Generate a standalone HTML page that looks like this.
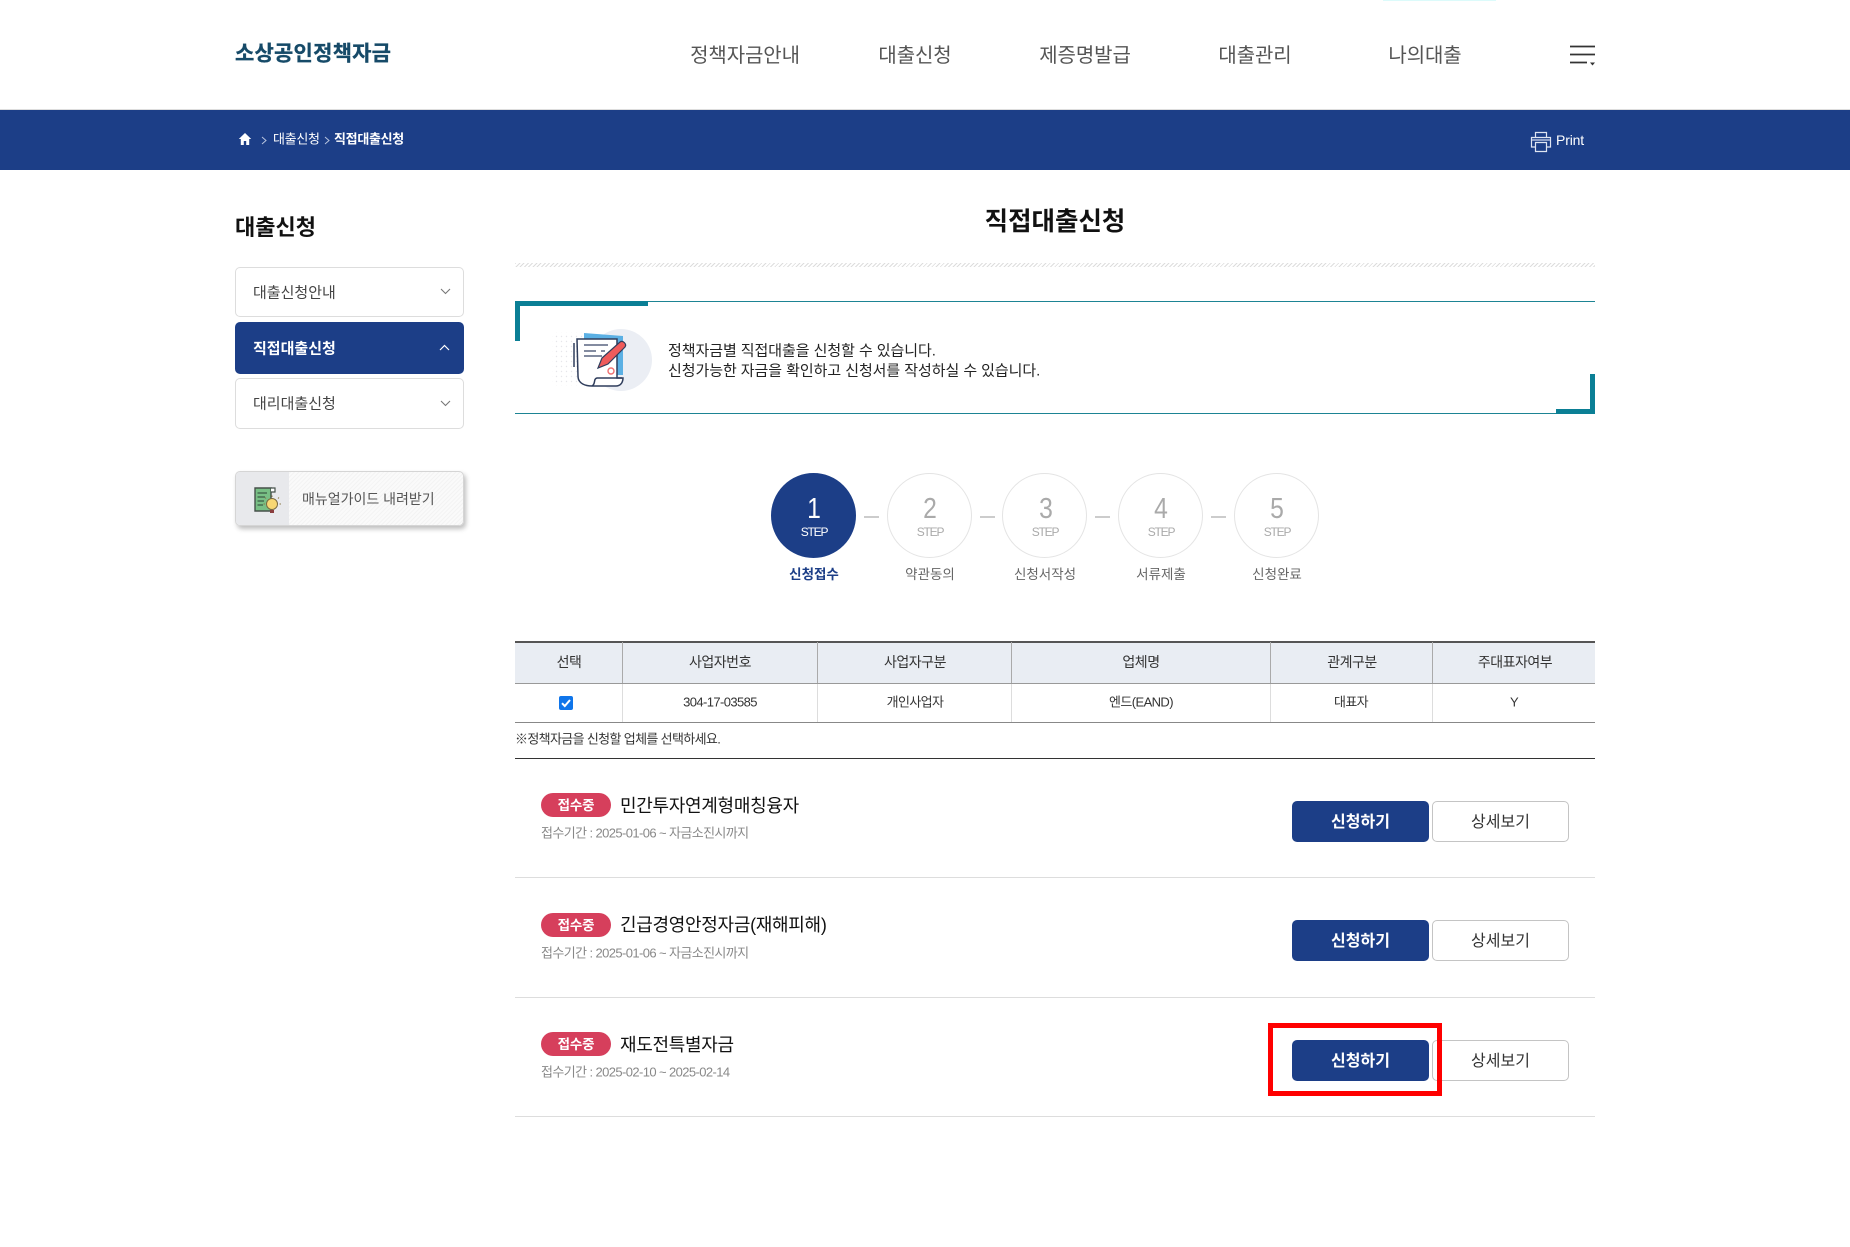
<!DOCTYPE html>
<html lang="ko"><head><meta charset="utf-8"><title>직접대출신청</title>
<style>
html,body{margin:0;padding:0;background:#fff}
#p{position:relative;width:1850px;height:1247px;overflow:hidden;background:#fff;font-family:"Liberation Sans","Noto Sans CJK KR",sans-serif;color:#333}
#p div,#p svg{position:absolute;box-sizing:border-box}
.t{white-space:nowrap;line-height:1}
.c{transform:translateX(-50%)}
.m{transform:translateY(-50%)}
.cm{transform:translate(-50%,-50%)}
.nav{font-size:20px;color:#555;top:46px;letter-spacing:-.1px}
.box{left:235px;width:229px;border:1px solid #ddd;border-radius:5px;background:#fff}
.lab{left:253px;font-size:15px;color:#444}
.line{left:515px;width:1080px;height:1px;background:#ddd}
.sc{width:85px;height:85px;top:473px;border-radius:50%;border:1px solid #e4e4e4;background:#fff}
.sn{font-size:29px;top:495px;color:#aaa;font-weight:400;transform:translateX(-50%) scaleX(.85)}
.ss{font-size:12px;top:526px;color:#aaa;letter-spacing:-1.2px}
.sl{font-size:13.5px;top:568px;color:#666}
.dash{width:15px;height:2px;top:516px;background:#ccc}
.th{font-size:14px;top:662px;color:#333;letter-spacing:-.5px}
.td{font-size:13px;top:702px;color:#333;letter-spacing:-.6px}
.v{width:1px}
.badge{left:541px;width:70px;height:24px;border-radius:12px;background:#d63f5c;color:#fff;font-size:13.5px;font-weight:700;text-align:center;line-height:26px;letter-spacing:-.2px}
.it{left:620px;font-size:18px;color:#111;letter-spacing:-.3px}
.sub{left:541px;font-size:13px;color:#888;letter-spacing:-.6px}
.b1{left:1292px;width:137px;height:41px;background:#1c3e87;border-radius:5px;color:#fff;font-size:16px;font-weight:700;text-align:center;line-height:43px}
.b2{left:1432px;width:137px;height:41px;background:#fff;border:1px solid #c4c4c4;border-radius:5px;color:#333;font-size:16px;text-align:center;line-height:41px}
</style></head><body><div id="p">

<div style="left:1383px;top:0;width:113px;height:1px;background:#dcfbfb"></div>
<div class="t m" style="left:235px;top:53.500px;font-size:21px;font-weight:700;color:#164a68;letter-spacing:.2px;-webkit-text-stroke:.3px #164a68">소상공인정책자금</div>
<div class="t c nav" style="left:745px">정책자금안내</div>
<div class="t c nav" style="left:915px">대출신청</div>
<div class="t c nav" style="left:1085px">제증명발급</div>
<div class="t c nav" style="left:1255px">대출관리</div>
<div class="t c nav" style="left:1425px">나의대출</div>
<svg style="left:1570px;top:44px" width="26" height="22" viewBox="0 0 26 22"><path d="M0 2.500H25M0 10.500H25M0 18.500H17" stroke="#333" stroke-width="1.800" fill="none"/><path d="M20 18.500H25L22.500 21.500Z" fill="#333"/></svg>

<div style="left:0;top:109px;width:1850px;height:1px;background:#ddd"></div>
<div style="left:0;top:110px;width:1850px;height:60px;background:#1c3e87"></div>
<svg style="left:238px;top:132px" width="14" height="14" viewBox="0 0 14 14"><path d="M7 1L.8 7H2.800V13H5.800V9H8.200V13H11.200V7H13.200Z" fill="#fff"/></svg>
<svg style="left:261px;top:136px" width="6" height="9" viewBox="0 0 6 9"><path d="M1 1L5 4.500L1 8" stroke="#b8c4de" fill="none"/></svg>
<div class="t m" style="left:273px;top:139px;font-size:13px;color:#fff;letter-spacing:-.3px">대출신청</div>
<svg style="left:324px;top:136px" width="6" height="9" viewBox="0 0 6 9"><path d="M1 1L5 4.500L1 8" stroke="#b8c4de" fill="none"/></svg>
<div class="t m" style="left:334px;top:139px;font-size:13px;font-weight:700;color:#fff;letter-spacing:-.3px">직접대출신청</div>
<svg style="left:1530px;top:131px" width="22" height="22" viewBox="0 0 22 22" fill="none" stroke="#dfe5f2" stroke-width="1.200"><path d="M5.500 6V1.500H16.500V6"/><path d="M5 16H1.500V6.500H20.500V16H17"/><path d="M5.500 11.500H16.500V20.500H5.500Z"/><path d="M2 9H20" stroke="#8d9fc8" stroke-width="2"/></svg>
<div class="t m" style="left:1556px;top:140px;font-size:14px;color:#fff;letter-spacing:-.15px">Print</div>

<div class="t m" style="left:235px;top:228px;font-size:22px;font-weight:700;color:#111">대출신청</div>
<div class="box" style="top:267px;height:50px"></div>
<div class="t m lab" style="top:293px">대출신청안내</div>
<svg style="left:440px;top:288px" width="11" height="7" viewBox="0 0 11 7"><path d="M1 1L5.500 5.500L10 1" stroke="#777" stroke-width="1.100" fill="none"/></svg>
<div class="box" style="top:322px;height:52px;background:#1c3e87;border-color:#1c3e87"></div>
<div class="t m lab" style="top:349px;color:#fff;font-weight:700">직접대출신청</div>
<svg style="left:439px;top:344px" width="11" height="7" viewBox="0 0 11 7"><path d="M1 6L5.500 1.500L10 6" stroke="#fff" stroke-width="1.200" fill="none"/></svg>
<div class="box" style="top:378px;height:51px"></div>
<div class="t m lab" style="top:404px">대리대출신청</div>
<svg style="left:440px;top:400px" width="11" height="7" viewBox="0 0 11 7"><path d="M1 1L5.500 5.500L10 1" stroke="#777" stroke-width="1.100" fill="none"/></svg>

<div style="left:235px;top:471px;width:229px;height:55px;border:1px solid #d5d5d5;border-radius:5px;background:repeating-linear-gradient(135deg,#fafafa 0 2px,#f3f3f3 2px 3px);box-shadow:2px 3px 5px rgba(0,0,0,.25);overflow:hidden">
<div style="left:0;top:0;width:53px;height:55px;background:#e8e9ec"></div></div>
<svg style="left:253px;top:485px" width="30" height="30" viewBox="0 0 30 30"><path d="M2 3H18V26H2Z" fill="#78bf85" stroke="#45504a" stroke-width="1.400"/><path d="M18 3H22V7H18" fill="#fff" stroke="#45504a" stroke-width="1.200"/><path d="M4.500 8H14M4.500 12H12M4.500 16H11M4.500 20H10" stroke="#3c5c46" stroke-width="1.200"/><circle cx="19" cy="19" r="5.500" fill="#f7d774" stroke="#7a6a40"/><path d="M17 25H21V28H17Z" fill="#8a3d3d"/><path d="M19 10.500V12M26 12.500L25 13.500M28 19H26.500M10.500 19H12M12 12.500L13 13.500" stroke="#8b7a4a"/></svg>
<div class="t m" style="left:302px;top:499px;font-size:14px;color:#555">매뉴얼가이드 내려받기</div>

<div class="t c" style="left:1055px;top:210px;font-size:25.500px;font-weight:700;color:#111">직접대출신청</div>
<div style="left:515px;top:263px;width:1080px;height:4px;background:repeating-linear-gradient(135deg,#ddd 0 1px,#fff 1px 3px)"></div>

<div class="line" style="top:301px;background:#1d8494"></div>
<div class="line" style="top:413px;background:#1d8494"></div>
<div style="left:515px;top:301px;width:133px;height:5px;background:#0b7f95"></div>
<div style="left:515px;top:301px;width:5px;height:40px;background:#0b7f95"></div>
<div style="left:1556px;top:409px;width:39px;height:5px;background:#0b7f95"></div>
<div style="left:1590px;top:374px;width:5px;height:40px;background:#0b7f95"></div>

<svg style="left:545px;top:320px" width="115" height="80" viewBox="545 320 115 80">
<defs><pattern id="d" width="5" height="5" patternUnits="userSpaceOnUse"><circle cx="1.500" cy="1.500" r=".7" fill="#e6e6ea"/></pattern></defs>
<rect x="552" y="332" width="40" height="54" fill="url(#d)"/>
<circle cx="621" cy="360" r="31" fill="#ebeef4"/>
<path d="M584 333L623 336V375H584Z" fill="#5bb0e4"/>
<path d="M577 339H617V378H623C623 383 620 386 616 386H592C586 386 578 384 578 376Z" fill="#fff" stroke="#2f3d5c" stroke-width="1.500"/>
<path d="M574 343V367" stroke="#2f3d5c" stroke-width="1.500"/>
<path d="M584 345H608M584 351H596M601 351H605M584 356H602" stroke="#5a6580" stroke-width="1.500"/>
<path d="M592 386C596 384 593 379 597 378H622" fill="none" stroke="#2f3d5c" stroke-width="1.500"/>
<path d="M598 368L602 358L620 342C623 340 627 344 625 347L608 364Z" fill="#ef5b5b" stroke="#2f3d5c" stroke-width="1.200"/>
<circle cx="611" cy="371" r="3" fill="#fff" stroke="#ef6f6f" stroke-width="1.400"/>
</svg>
<div class="t m" style="left:668px;top:351px;font-size:15px;color:#222;letter-spacing:-.06px">정책자금별 직접대출을 신청할 수 있습니다.</div>
<div class="t m" style="left:668px;top:371px;font-size:15px;color:#222;letter-spacing:-.06px">신청가능한 자금을 확인하고 신청서를 작성하실 수 있습니다.</div>

<div class="sc" style="left:771px;background:#1c3e87;border-color:#1c3e87"></div>
<div class="sc" style="left:887px"></div>
<div class="sc" style="left:1002px"></div>
<div class="sc" style="left:1118px"></div>
<div class="sc" style="left:1234px"></div>
<div class="dash" style="left:864px"></div><div class="dash" style="left:980px"></div><div class="dash" style="left:1095px"></div><div class="dash" style="left:1211px"></div>
<div class="t sn" style="left:814px;color:#fff">1</div><div class="t c ss" style="left:814px;color:#fff">STEP</div><div class="t c sl" style="left:814px;color:#1c3e87;font-weight:700">신청접수</div>
<div class="t sn" style="left:930px">2</div><div class="t c ss" style="left:930px">STEP</div><div class="t c sl" style="left:930px">약관동의</div>
<div class="t sn" style="left:1046px">3</div><div class="t c ss" style="left:1045px">STEP</div><div class="t c sl" style="left:1045px">신청서작성</div>
<div class="t sn" style="left:1161px">4</div><div class="t c ss" style="left:1161px">STEP</div><div class="t c sl" style="left:1161px">서류제출</div>
<div class="t sn" style="left:1277px">5</div><div class="t c ss" style="left:1277px">STEP</div><div class="t c sl" style="left:1277px">신청완료</div>

<div class="line" style="top:641px;height:42px;background:#e9edf3"></div>
<div class="line" style="top:641px;height:2px;background:#555"></div>
<div class="line" style="top:683px;background:#999"></div>
<div class="line" style="top:722px;background:#888"></div>
<div class="line" style="top:758px;background:#333"></div>
<div class="v" style="left:622px;top:642px;height:41px;background:#aaa"></div><div class="v" style="left:622px;top:684px;height:38px;background:#ddd"></div>
<div class="v" style="left:817px;top:642px;height:41px;background:#aaa"></div><div class="v" style="left:817px;top:684px;height:38px;background:#ddd"></div>
<div class="v" style="left:1011px;top:642px;height:41px;background:#aaa"></div><div class="v" style="left:1011px;top:684px;height:38px;background:#ddd"></div>
<div class="v" style="left:1270px;top:642px;height:41px;background:#aaa"></div><div class="v" style="left:1270px;top:684px;height:38px;background:#ddd"></div>
<div class="v" style="left:1432px;top:642px;height:41px;background:#aaa"></div><div class="v" style="left:1432px;top:684px;height:38px;background:#ddd"></div>
<div class="t cm th" style="left:569px">선택</div>
<div class="t cm th" style="left:720px">사업자번호</div>
<div class="t cm th" style="left:915px">사업자구분</div>
<div class="t cm th" style="left:1141px">업체명</div>
<div class="t cm th" style="left:1352px">관계구분</div>
<div class="t cm th" style="left:1515px">주대표자여부</div>
<svg style="left:559px;top:696px" width="14" height="14" viewBox="0 0 14 14"><rect width="14" height="14" rx="2" fill="#0f75ea"/><path d="M3 7.200L5.800 10L11 4" stroke="#fff" stroke-width="2" fill="none"/></svg>
<div class="t cm td" style="left:720px">304-17-03585</div>
<div class="t cm td" style="left:915px">개인사업자</div>
<div class="t cm td" style="left:1141px">엔드(EAND)</div>
<div class="t cm td" style="left:1351px">대표자</div>
<div class="t cm td" style="left:1514px">Y</div>
<div class="t m" style="left:515px;top:739px;font-size:13px;color:#333;letter-spacing:-.65px">※정책자금을 신청할 업체를 선택하세요.</div>

<div class="badge" style="top:793px">접수중</div>
<div class="t m it" style="top:806px">민간투자연계형매칭융자</div>
<div class="t m sub" style="top:833px">접수기간 : 2025-01-06 ~ 자금소진시까지</div>
<div class="b1" style="top:801px">신청하기</div><div class="b2" style="top:801px">상세보기</div>
<div class="line" style="top:877px"></div>

<div class="badge" style="top:913px">접수중</div>
<div class="t m it" style="top:925px">긴급경영안정자금(재해피해)</div>
<div class="t m sub" style="top:953px">접수기간 : 2025-01-06 ~ 자금소진시까지</div>
<div class="b1" style="top:920px">신청하기</div><div class="b2" style="top:920px">상세보기</div>
<div class="line" style="top:997px"></div>

<div class="badge" style="top:1032px">접수중</div>
<div class="t m it" style="top:1045px">재도전특별자금</div>
<div class="t m sub" style="top:1072px">접수기간 : 2025-02-10 ~ 2025-02-14</div>
<div class="b1" style="top:1040px">신청하기</div><div class="b2" style="top:1040px">상세보기</div>
<div class="line" style="top:1116px"></div>

<div style="left:1268px;top:1023px;width:174px;height:73px;border:5px solid #f00"></div>
</div></body></html>
